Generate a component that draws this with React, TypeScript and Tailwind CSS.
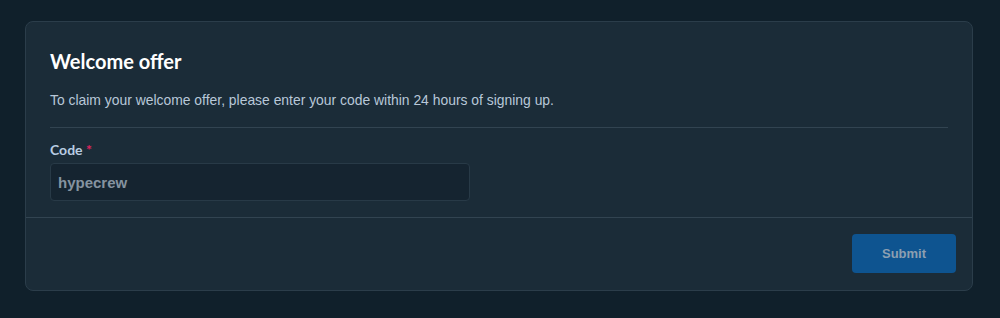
import React, { useState } from 'react';

const App: React.FC = () => {
  const [code, setCode] = useState('hypecrew');

  return (
    <div className="min-h-[318px] bg-[#10202b] pl-[25px] pr-[27px] pt-[21px] pb-[27px] font-['Liberation_Sans',Arial,sans-serif]">
      <div className="rounded-lg border border-[#2b3d4a] bg-[#1b2c38]">
        {/* Body */}
        <div className="px-6 pt-[25px] pb-4">
          <h2 className="font-['Lato',sans-serif] text-[20px] leading-7 font-bold text-white">Welcome offer</h2>
          <p className="mt-[15px] text-[13.9px] leading-5 text-[#b8c8d8]">
            To claim your welcome offer, please enter your code within 24 hours of signing up.
          </p>
          <div className="mt-[17px] border-t border-[#324451]" />
          <label className="mt-[12px] block font-['Lato',sans-serif] text-[14px] leading-5 font-bold text-[#b9cde2]">
            Code <span className="text-[#e0245e]">*</span>
          </label>
          <input
            value={code}
            onChange={(e) => setCode(e.target.value)}
            className="mt-[3px] h-[38px] w-[420px] rounded border border-[#283a47] bg-[#152430] pl-[7px] pr-2 text-[15px] font-bold text-[#8593a0] outline-none"
          />
        </div>
        {/* Footer */}
        <div className="flex justify-end border-t border-[#324451] px-4 pt-4 pb-[17px]">
          <button className="h-[39px] w-[104px] rounded bg-[#0e5490] text-[13px] font-bold text-[#8c9fb1]">
            Submit
          </button>
        </div>
      </div>
    </div>
  );
};

export default App;
